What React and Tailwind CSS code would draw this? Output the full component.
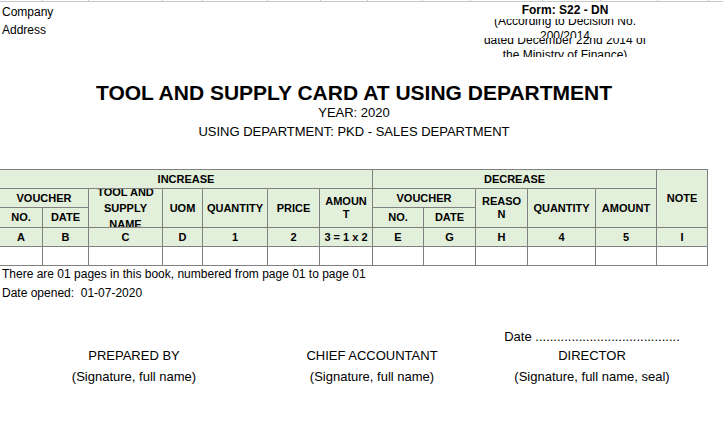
import React from 'react'

const HEAD = 'border-r border-b border-[#808080] bg-[#e2efda] flex items-center justify-center text-center overflow-hidden font-bold text-[11px] leading-[13px] text-black'
const BODY = 'border-r border-b border-[#808080] bg-white'

const letters = ['A', 'B', 'C', 'D', '1', '2', '3 = 1 x 2', 'E', 'G', 'H', '4', '5', 'I']

export default function App() {
  return (
    <div className="w-[723px] h-[432px] bg-white font-['Liberation_Sans',Arial,sans-serif] text-black overflow-hidden">
      {/* sheet gridline with column ticks */}
      <div className="h-[2px] border-b border-[#c8c8c8] grid grid-cols-[43px_46px_74px_40px_65px_53px_47px_55px_48px_72px_58px_57px_51px]">
        {letters.map((l) => (
          <div key={'t' + l} className="border-r border-[#c8c8c8]" />
        ))}
      </div>

      {/* header */}
      <div className="flex">
        <div className="w-[460px] pt-px text-[12px] leading-[18px]">
          <div className="pl-[2px]">Company</div>
          <div className="pl-[2px]">Address</div>
        </div>
        <div className="w-[210px] -mt-[2px] text-[12px]">
          <div className="h-[19px] flex items-center justify-center font-bold">Form: S22 - DN</div>
          <div className="h-[19px] flex items-center justify-center overflow-hidden text-center">
            <div className="leading-[15px]">(According to Decision No.<br />200/2014</div>
          </div>
          <div className="h-[19px] flex items-center justify-center overflow-hidden text-center">
            <div className="leading-[15px]">dated December 22nd 2014 of<br />the Ministry of Finance)</div>
          </div>
        </div>
      </div>

      {/* title */}
      <div className="w-[708px] mt-[25px] text-center">
        <h1 className="text-[21px] leading-[22px] font-bold">TOOL AND SUPPLY CARD AT USING DEPARTMENT</h1>
        <p className="text-[13px] leading-[18px]">YEAR: 2020</p>
        <p className="text-[13px] leading-[20px]">USING DEPARTMENT: PKD - SALES DEPARTMENT</p>
      </div>

      {/* table */}
      <div className="mt-[27px] w-[708px] grid grid-cols-[43px_46px_74px_40px_65px_52px_53px_51px_52px_52px_68px_61px_51px] grid-rows-[19px_19px_20px_19px_19px] border-t border-[#808080]">
        <div className={`${HEAD} col-span-7`}>INCREASE</div>
        <div className={`${HEAD} col-span-5`}>DECREASE</div>
        <div className={`${HEAD} row-span-3`}>NOTE</div>

        <div className={`${HEAD} col-span-2`}>VOUCHER</div>
        <div className={`${HEAD} row-span-2 leading-[16px]`}>TOOL AND<br />SUPPLY<br />NAME</div>
        <div className={`${HEAD} row-span-2`}>UOM</div>
        <div className={`${HEAD} row-span-2`}>QUANTITY</div>
        <div className={`${HEAD} row-span-2`}>PRICE</div>
        <div className={`${HEAD} row-span-2 leading-[11px]`}>AMOUN<br />T</div>
        <div className={`${HEAD} col-span-2`}>VOUCHER</div>
        <div className={`${HEAD} row-span-2 leading-[12px]`}>REASO<br />N</div>
        <div className={`${HEAD} row-span-2`}>QUANTITY</div>
        <div className={`${HEAD} row-span-2`}>AMOUNT</div>

        <div className={HEAD}>NO.</div>
        <div className={HEAD}>DATE</div>
        <div className={HEAD}>NO.</div>
        <div className={HEAD}>DATE</div>

        {letters.map((l) => (
          <div key={l} className={HEAD}>{l}</div>
        ))}
        {letters.map((l) => (
          <div key={'b' + l} className={BODY} />
        ))}
      </div>

      {/* notes */}
      <div className="text-[12px] pl-[2px]">
        <p className="leading-[16px]">There are 01 pages in this book, numbered from page 01 to page 01</p>
        <p className="leading-[22px]">Date opened:&nbsp; 01-07-2020</p>
      </div>

      {/* signatures */}
      <div className="mt-[23px] w-[708px] grid grid-cols-[268px_208px_232px] text-[13px] text-center">
        <div />
        <div />
        <div className="leading-[20px]">Date ........................................</div>
        <div className="leading-[18px]">PREPARED BY</div>
        <div className="leading-[18px]">CHIEF ACCOUNTANT</div>
        <div className="leading-[18px]">DIRECTOR</div>
        <div className="leading-[24px]">(Signature, full name)</div>
        <div className="leading-[24px]">(Signature, full name)</div>
        <div className="leading-[24px]">(Signature, full name, seal)</div>
      </div>
    </div>
  )
}
